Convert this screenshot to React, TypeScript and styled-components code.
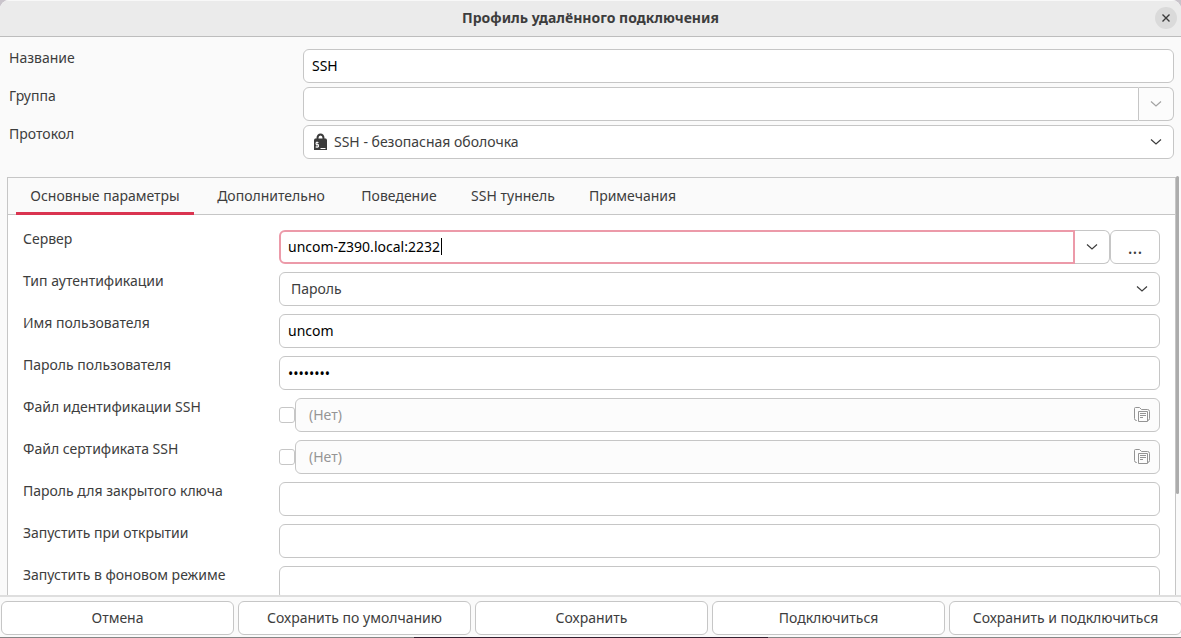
import React from "react";
import styled, { createGlobalStyle, css } from "styled-components";

const Global = createGlobalStyle`
  *, *::before, *::after { box-sizing: border-box; }
  body { margin: 0; background: #c9c4cb; }
  body, button, input, select { font-family: "Noto Sans", "Open Sans", sans-serif; font-size: 14px; line-height: 20px; color: #3d3d3d; }
`;

const line = "#c6c6c6";

const Dialog = styled.main`
  display: flex;
  flex-direction: column;
  height: 100vh;
  overflow: hidden;
  background: #fafafa;
  border-radius: 9px 9px 0 0;
`;
const TitleBar = styled.header`
  display: grid;
  grid-template-columns: 32px 1fr 32px;
  align-items: center;
  flex: none;
  height: 37px;
  background: #ebebeb;
  box-shadow: inset 0 1px #f8f8f8;
  border-bottom: 1px solid #bdbdbd;
`;
const Title = styled.h1`
  grid-column: 2;
  margin: 0;
  text-align: center;
  font-size: 14px;
  line-height: 20px;
  font-weight: 700;
`;
const CloseButton = styled.button`
  display: grid;
  place-items: center;
  width: 22px;
  height: 22px;
  margin-left: 6px;
  padding: 0;
  border: 0;
  border-radius: 50%;
  background: #dadada;
`;

const Profile = styled.section`
  display: grid;
  flex: none;
  gap: 4px;
  padding: 12px 7px 18px 9px;
`;
const Row = styled.div<{ $labelWidth: number }>`
  display: grid;
  grid-template-columns: ${(p) => p.$labelWidth}px minmax(0, 1fr);
`;
const Label = styled.label`
  line-height: 18px;
  white-space: nowrap;
`;
const Group = styled.div`
  display: flex;
  align-items: center;
  min-width: 0;
`;
const frame = css`
  height: 34px;
  border: 1px solid ${line};
  border-radius: 6px;
  background: #fff;
`;
const Entry = styled.input<{ $joined?: boolean; $active?: boolean }>`
  ${frame}
  flex: 1;
  width: 100%;
  min-width: 0;
  padding: 0 8px 2px;
  color: #000;
  outline: none;
  ${(p) => p.$joined && css`border-radius: 6px 0 0 6px;`}
  ${(p) => p.$active && css`border: 2px solid #ec9aa9; padding: 0 7px 2px;`}
`;
const PasswordEntry = styled(Entry)`
  padding-bottom: 0;
`;
const EntryBox = styled.div`
  position: relative;
  display: flex;
  flex: 1;
  min-width: 0;
`;
const Caret = styled.span`
  position: absolute;
  left: 162px;
  top: 8px;
  width: 1px;
  height: 17px;
  background: #000;
`;
const ComboButton = styled.button<{ $muted?: boolean }>`
  ${frame}
  display: grid;
  place-items: center;
  width: 35px;
  padding: 0;
  border-left: 0;
  border-radius: 0 6px 6px 0;
  color: ${(p) => (p.$muted ? "#a3a3a3" : "#3d3d3d")};
  background: ${(p) => (p.$muted ? "#fcfcfc" : "#fff")};
`;
const MoreButton = styled.button`
  ${frame}
  width: 50px;
  padding: 0;
  font-size: 18px;
`;
const SelectBox = styled.div`
  position: relative;
  flex: 1;
  min-width: 0;
`;
const Select = styled.select<{ $icon?: boolean }>`
  ${frame}
  display: block;
  appearance: none;
  width: 100%;
  padding: 0 32px 0 ${(p) => (p.$icon ? 30 : 11)}px;
`;
const Adornment = styled.span<{ $side: "left" | "right" }>`
  position: absolute;
  top: 0;
  ${(p) => (p.$side === "left" ? "left: 10px;" : "right: 12px;")}
  display: grid;
  place-items: center;
  height: 34px;
  pointer-events: none;
`;
const Check = styled.input`
  appearance: none;
  flex: none;
  width: 16px;
  height: 16px;
  margin: 0;
  border: 1px solid ${line};
  border-radius: 3px;
  background: #fff;
`;
const FileButton = styled.button`
  ${frame}
  display: flex;
  flex: 1;
  align-items: center;
  justify-content: space-between;
  padding: 0 9px 0 13px;
  background: #fcfcfc;
  color: #959595;
`;

const Notebook = styled.section`
  position: relative;
  display: flex;
  flex: 1;
  flex-direction: column;
  min-height: 0;
  padding: 0 5px 0 7px;
`;
const Tabs = styled.nav`
  display: flex;
  flex: none;
  gap: 8px;
  height: 38px;
  padding: 0 8px;
  border: 1px solid ${line};
`;
const Tab = styled.button<{ $active?: boolean; $width: number }>`
  width: ${(p) => p.$width}px;
  height: 37px;
  padding: 2px 0 0;
  border: 0;
  border-bottom: 3px solid ${(p) => (p.$active ? "#da3450" : "transparent")};
  background: transparent;
  white-space: nowrap;
`;
const Page = styled.div`
  display: grid;
  flex: 1;
  align-content: start;
  gap: 8px;
  min-height: 0;
  overflow: hidden;
  padding: 15px 15px 0;
  border: solid ${line};
  border-width: 0 1px;
  background: #fff;
`;
const ScrollThumb = styled.span`
  position: absolute;
  top: -1px;
  right: 2px;
  width: 3px;
  height: 76%;
  border-radius: 2px;
  background: #acacac;
`;

const Footer = styled.footer`
  display: grid;
  grid-template-columns: repeat(5, minmax(0, 1fr));
  flex: none;
  gap: 4px;
  margin-right: -1px;
  padding: 4px 0 3px 1px;
  border-top: 2px solid #dedede;
  background: linear-gradient(90deg, #858585 35%, #33202f 35% 65%, #858585 65%) bottom / 100% 1px no-repeat;
`;
const Action = styled.button`
  ${frame}
  padding: 0;
  white-space: nowrap;
`;

const Chevron = () => (
  <svg width="12" height="8" viewBox="0 0 12 8" fill="none" stroke="currentColor" strokeWidth="1.2">
    <path d="M1 1.5 6 6 11 1.5" />
  </svg>
);
const LockIcon = () => (
  <svg width="16" height="18" viewBox="0 0 16 18">
    <path d="M4.5 6V5a3 3.5 0 0 1 6 0v1" fill="none" stroke="#3b3b3b" strokeWidth="2" />
    <path d="M2 5.5h11l1 1V17H1V6.5z" fill="#3b3b3b" />
    <path d="M5.5 9.5H3v2h2.5v2.5H2.5M4 8.5v6.5" fill="none" stroke="#fff" strokeWidth=".9" />
    <path d="M7.5 15.5h5" stroke="#fff" />
  </svg>
);
const FilesIcon = () => (
  <svg width="16" height="16" viewBox="0 0 16 16" fill="none" stroke="#949494">
    <path d="M3 13.5H2.5q-2 0-2-2v-10q0-1 1-1h4l2 2h6q2 0 2 2v7q0 2-2 2" />
    <path d="M4.5 4.5h9v10h-9zM6 6.5h6M6 8.5h6M6 10.5h3" />
  </svg>
);

const tabs: [string, number][] = [
  ["Основные параметры", 178],
  ["Дополнительно", 138],
  ["Поведение", 102],
  ["SSH туннель", 110],
  ["Примечания", 113],
];
const actions = ["Отмена", "Сохранить по умолчанию", "Сохранить", "Подключиться", "Сохранить и подключиться"];

const Field = ({ id, label, wide, children }: { id: string; label: string; wide?: boolean; children: React.ReactNode }) => (
  <Row $labelWidth={wide ? 294 : 256}>
    <Label htmlFor={id}>{label}</Label>
    <Group>{children}</Group>
  </Row>
);

const FileField = ({ id, label }: { id: string; label: string }) => (
  <Field id={id} label={label}>
    <Check id={id} type="checkbox" />
    <FileButton type="button" disabled>
      (Нет)
      <FilesIcon />
    </FileButton>
  </Field>
);

export default function App() {
  return (
    <>
      <Global />
      <Dialog>
        <TitleBar>
          <Title>Профиль удалённого подключения</Title>
          <CloseButton type="button" aria-label="Закрыть">
            <svg width="8" height="8" viewBox="0 0 8 8" stroke="#3b3b3b" strokeWidth="1.4">
              <path d="m.5.5 7 7m0-7-7 7" />
            </svg>
          </CloseButton>
        </TitleBar>
        <Profile>
          <Field wide id="name" label="Название">
            <Entry id="name" defaultValue="SSH" />
          </Field>
          <Field wide id="group" label="Группа">
            <Entry $joined id="group" />
            <ComboButton $muted type="button" aria-label="Выбрать группу"><Chevron /></ComboButton>
          </Field>
          <Field wide id="protocol" label="Протокол">
            <SelectBox>
              <Select $icon id="protocol"><option>SSH - безопасная оболочка</option></Select>
              <Adornment $side="left"><LockIcon /></Adornment>
              <Adornment $side="right"><Chevron /></Adornment>
            </SelectBox>
          </Field>
        </Profile>
        <Notebook>
          <Tabs>
            {tabs.map(([name, width], i) => (
              <Tab key={name} type="button" $width={width} $active={i === 0}>{name}</Tab>
            ))}
          </Tabs>
          <Page>
            <Field id="server" label="Сервер">
              <EntryBox>
                <Entry $joined $active id="server" defaultValue="uncom-Z390.local:2232" />
                <Caret />
              </EntryBox>
              <ComboButton type="button" aria-label="Выбрать сервер"><Chevron /></ComboButton>
              <MoreButton type="button">...</MoreButton>
            </Field>
            <Field id="auth" label="Тип аутентификации">
              <SelectBox>
                <Select id="auth"><option>Пароль</option></Select>
                <Adornment $side="right"><Chevron /></Adornment>
              </SelectBox>
            </Field>
            <Field id="user" label="Имя пользователя">
              <Entry id="user" defaultValue="uncom" />
            </Field>
            <Field id="password" label="Пароль пользователя">
              <PasswordEntry id="password" type="password" defaultValue="password" />
            </Field>
            <FileField id="identity" label="Файл идентификации SSH" />
            <FileField id="certificate" label="Файл сертификата SSH" />
            <Field id="passphrase" label="Пароль для закрытого ключа">
              <PasswordEntry id="passphrase" type="password" />
            </Field>
            <Field id="startup" label="Запустить при открытии">
              <Entry id="startup" />
            </Field>
            <Field id="background" label="Запустить в фоновом режиме">
              <Entry id="background" />
            </Field>
          </Page>
          <ScrollThumb />
        </Notebook>
        <Footer>
          {actions.map((name) => (
            <Action key={name} type="button">{name}</Action>
          ))}
        </Footer>
      </Dialog>
    </>
  );
}
